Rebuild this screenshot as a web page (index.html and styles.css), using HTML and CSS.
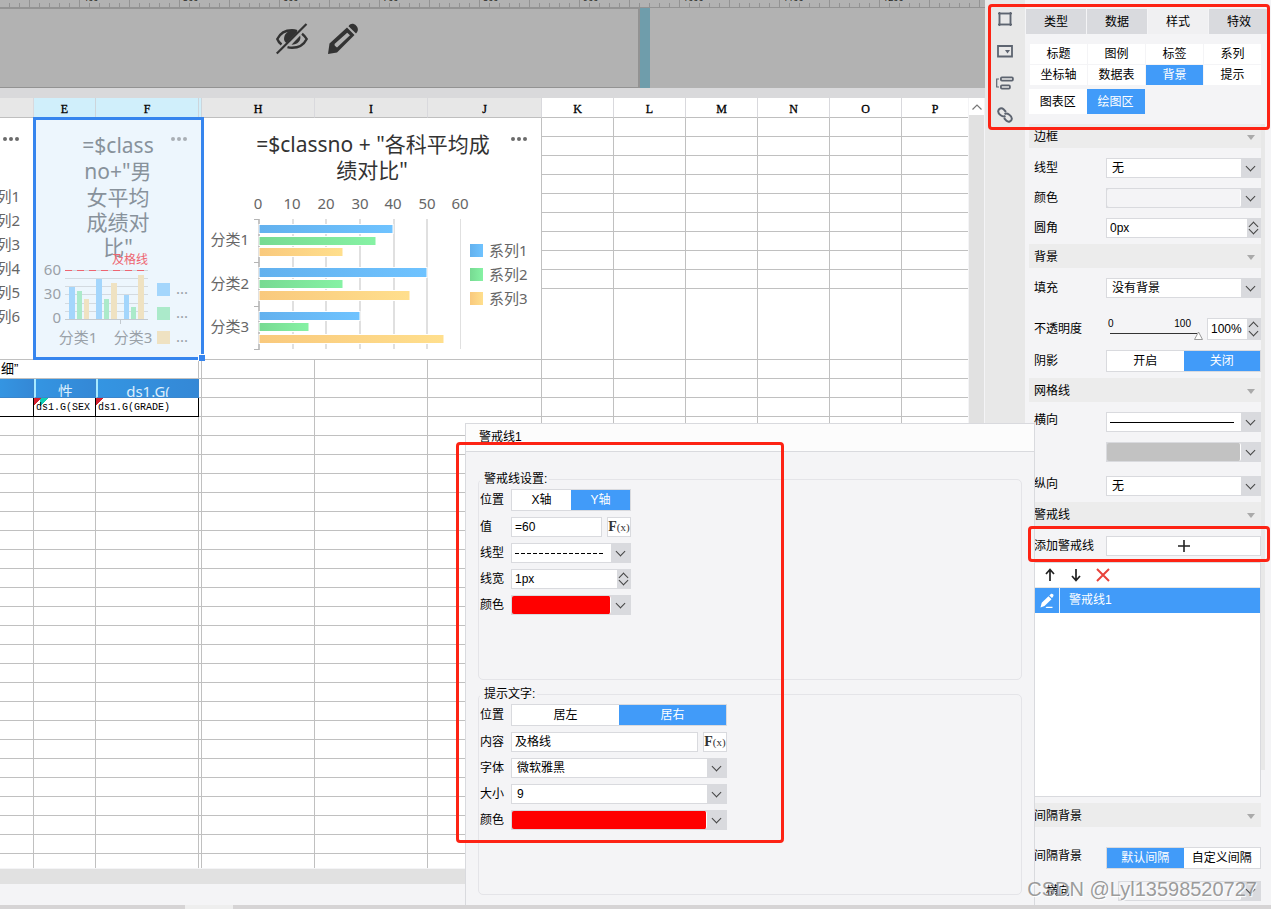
FILE: index.html
```html
<!DOCTYPE html>
<html lang="zh-CN">
<head>
<meta charset="utf-8">
<title>报表设计器</title>
<link rel="stylesheet" href="styles.css">
</head>
<body>
<div class="app">
  <div class="main">
    <div class="work">
      <svg class="ruler" width="100%" height="8" aria-hidden="true">
        <defs>
          <pattern id="ticks" x="29" width="50" height="8" patternUnits="userSpaceOnUse">
            <path d="M.5 0v8M10.5 3v5M20.5 3v5M30.5 3v5M40.5 3v5" stroke="#939393" fill="none"/>
          </pattern>
        </defs>
        <rect width="100%" height="8" fill="url(#ticks)"/>
        <path d="M0 7.5h2000" stroke="#939393"/>
        <g class="ruler-text"><text x="83" y="1">400</text><text x="183" y="1">500</text><text x="283" y="1">600</text><text x="383" y="1">700</text><text x="483" y="1">800</text><text x="583" y="1">900</text><text x="683" y="1">1000</text><text x="783" y="1">1100</text><text x="883" y="1">1200</text></g>
      </svg>
      <div class="banner">
        <div class="banner-item">
          <svg width="32" height="32" viewBox="0 0 32 32" fill="none" stroke="#333" stroke-width="2.4">
            <path d="M5.500 21.500C3 19.500 1.800 17.500 1.300 16C4 10.500 9.500 7.200 16 7.200c2 0 3.500.3 5 .9"/>
            <path d="M26 10.800c2.200 1.700 3.800 3.700 4.700 5.200C28 21.500 22.500 24.800 16 24.800c-1.800 0-3.200-.2-4.500-.6"/>
            <path d="M8 16c0-5 4-8.500 8.500-8.500 2 0 3.500.5 5 1.500L10.500 20C9 19 8 17.500 8 16z" fill="#333" stroke="none"/>
            <path d="M24.200 12.500c1.300 5-2.700 9.300-8.700 9.300z" fill="#333" stroke="none"/>
            <path d="M.8 30.500L30.500 1" stroke-width="2.200"/>
          </svg>
          <svg width="32" height="32" viewBox="0 0 32 32">
            <path fill="#333" fill-rule="evenodd" d="M1 31l1.500-10.500L20 4.500l7.500 7.500L10 29.500zM7.800 22.800l2.200 1.700L23 12.200l-2.800-2.500L7.500 21z"/>
            <path fill="#333" d="M21.500 3.200C23.500.2 26.500.2 28.800 2.300c2.700 2.500 2.700 5.700.2 8.200z"/>
          </svg>
        </div>
        <div class="banner-grip"></div>
      </div>
      <div class="sheet-area">
        <div class="sheet">
          <table class="grid">
            <colgroup><col class="c-d"><col class="c-e"><col class="c-f"><col class="c-g"><col class="c-h"><col class="c-h"><col class="c-j"><col class="c-k"><col class="c-k"><col class="c-k"><col class="c-k"><col class="c-k"><col></colgroup>
            <thead>
              <tr><th class="used"></th><th class="sel">E</th><th class="sel">F</th><th class="sel"></th><th class="used">H</th><th class="used">I</th><th class="used">J</th><th>K</th><th>L</th><th>M</th><th>N</th><th>O</th><th>P</th></tr>
            </thead>
            <tbody>
              <tr>
                <td rowspan="10" class="chart-cell no-line">
                  <svg class="chart" width="33" height="241" viewBox="0 118 33 241">
                    <g fill="#6b6b6b"><circle cx="5" cy="139" r="2"/><circle cx="11" cy="139" r="2"/><circle cx="17" cy="139" r="2"/></g>
                    <g class="legend" text-anchor="end"><text x="20" y="202">系列1</text><text x="20" y="226">系列2</text><text x="20" y="250">系列3</text><text x="20" y="274">系列4</text><text x="20" y="298">系列5</text><text x="20" y="322">系列6</text></g>
                  </svg>
                </td>
                <td rowspan="10" colspan="3" class="chart-cell">
                  <div class="selection">
                    <svg class="chart" width="165" height="237" viewBox="36 120 165 237">
                      <g class="title faded" text-anchor="middle"><text x="118" y="153">=$class</text><text x="118" y="179">no+"男</text><text x="118" y="205">女平均</text><text x="118" y="230">成绩对</text><text x="118" y="255">比"</text></g>
                      <g fill="#a9afb5"><circle cx="173" cy="139" r="2"/><circle cx="179" cy="139" r="2"/><circle cx="185" cy="139" r="2"/></g>
                      <path d="M65 278.500h83M65 286.500h83M65 294.500h83M65 303.500h83M65 311.500h83" stroke="#d3dae0"/>
                      <path d="M65 319.500h83M120.500 320v4" stroke="#c3cad0"/>
                      <g fill="#a4d6fc"><path d="M69 287h6v32h-6zM96 279h6v40h-6zM124 295h5v24h-5z"/></g>
                      <g fill="#abeaca"><path d="M77 291h5v28h-5zM104 299h5v20h-5zM131 307h5v12h-5z"/></g>
                      <g fill="#efe2c2"><path d="M84 299h5v20h-5zM111 283h6v36h-6zM138 275h6v44h-6z"/></g>
                      <path d="M65 270.500h83" stroke="#cfd6dc"/><path d="M65 270.500h83" stroke="#ee6470" stroke-dasharray="7 5"/>
                      <text class="warn" x="148" y="264" text-anchor="end">及格线</text>
                      <g class="axis faded-axis" text-anchor="end"><text x="61" y="275">60</text><text x="61" y="299">30</text><text x="61" y="323">0</text></g>
                      <g class="axis faded-axis" text-anchor="middle"><text x="78" y="343">分类1</text><text x="133" y="343">分类3</text></g>
                      <path fill="#a4d6fc" d="M157 283h13v13h-13z"/><path fill="#abeaca" d="M157 307h13v13h-13z"/><path fill="#efe2c2" d="M157 331h13v13h-13z"/>
                      <g class="axis faded-axis"><text x="176" y="294">...</text><text x="176" y="318">...</text><text x="176" y="342">...</text></g>
                    </svg>
                  </div>
                </td>
                <td rowspan="10" colspan="3" class="chart-cell">
                  <svg class="chart" width="338" height="241" viewBox="202 118 338 241">
                    <defs>
                      <linearGradient id="b"><stop stop-color="#63b1ee"/><stop offset="1" stop-color="#6fc3ff"/></linearGradient>
                      <linearGradient id="g"><stop stop-color="#77da92"/><stop offset="1" stop-color="#86f2a4"/></linearGradient>
                      <linearGradient id="y"><stop stop-color="#f9c97d"/><stop offset="1" stop-color="#ffdf8d"/></linearGradient>
                    </defs>
                    <g class="title" text-anchor="middle"><text x="373" y="152">=$classno + "各科平均成</text><text x="372" y="178">绩对比"</text></g>
                    <g fill="#6b6b6b"><circle cx="513" cy="139" r="2"/><circle cx="519" cy="139" r="2"/><circle cx="525" cy="139" r="2"/></g>
                    <g class="axis" text-anchor="middle"><text x="258" y="209">0</text><text x="292" y="209">10</text><text x="326" y="209">20</text><text x="360" y="209">30</text><text x="393" y="209">40</text><text x="427" y="209">50</text><text x="460" y="209">60</text></g>
                    <path d="M293 219v130M326 219v130M360 219v130M394 219v130M427 219v130" stroke="#e0e0e0" stroke-width="2"/>
                    <path d="M460.500 219v130" stroke="#e0e0e0"/>
                    <path d="M259 219v131" stroke="#c4c4c4" stroke-width="2"/>
                    <path d="M254 219.500h5M254 262.500h5M254 306.500h5M254 349.500h5" stroke="#b4b4b4"/>
                    <g stroke="#fff"><g fill="url(#b)"><rect x="259" y="224.500" width="134" height="9"/><rect x="259" y="267.500" width="168" height="10"/><rect x="259" y="311.500" width="101" height="9"/></g>
                    <g fill="url(#g)"><rect x="259" y="236.500" width="117" height="9"/><rect x="259" y="279.500" width="84" height="9"/><rect x="259" y="322.500" width="50" height="9"/></g>
                    <g fill="url(#y)"><rect x="259" y="247.500" width="84" height="9"/><rect x="259" y="290.500" width="151" height="10"/><rect x="259" y="334.500" width="185" height="9"/></g></g>
                    <g class="axis" text-anchor="end"><text x="249" y="245">分类1</text><text x="249" y="289">分类2</text><text x="249" y="332">分类3</text></g>
                    <rect x="470" y="244" width="13" height="13" fill="url(#b)"/><rect x="470" y="268" width="13" height="13" fill="url(#g)"/><rect x="470" y="292" width="13" height="13" fill="url(#y)"/>
                    <g class="legend"><text x="489" y="256">系列1</text><text x="489" y="280">系列2</text><text x="489" y="304">系列3</text></g>
                  </svg>
                </td>
                <td></td><td></td><td></td><td></td><td></td><td></td>
              </tr>
              <tr><td></td><td></td><td></td><td></td><td></td><td></td></tr>
              <tr><td></td><td></td><td></td><td></td><td></td><td></td></tr>
              <tr><td></td><td></td><td></td><td></td><td></td><td></td></tr>
              <tr><td></td><td></td><td></td><td></td><td></td><td></td></tr>
              <tr><td></td><td></td><td></td><td></td><td></td><td></td></tr>
              <tr><td></td><td></td><td></td><td></td><td></td><td></td></tr>
              <tr><td></td><td></td><td></td><td></td><td></td><td></td></tr>
              <tr><td></td><td></td><td></td><td></td><td></td><td></td></tr>
              <tr class="tall"><td></td><td></td><td></td><td></td><td></td><td></td></tr>
              <tr><td colspan="3" class="detail">细”</td><td></td><td></td><td></td><td></td><td></td><td></td><td></td><td></td><td></td><td></td></tr>
              <tr><td class="blue"></td><td class="blue edge"><div>性</div></td><td class="blue edge"><div>ds1.G(</div></td><td></td><td></td><td></td><td></td><td></td><td></td><td></td><td></td><td></td><td></td></tr>
              <tr><td class="bound"></td><td class="bound mark expand">ds1.G(SEX</td><td class="bound mark">ds1.G(GRADE)</td><td></td><td></td><td></td><td></td><td></td><td></td><td></td><td></td><td></td><td></td></tr>
            </tbody>
            <tbody id="blank-rows"></tbody>
          </table>
        </div>
        <div class="vscroll"><button type="button" aria-label="向上滚动"><svg width="12" height="8" viewBox="0 0 12 8"><path d="M1.500 6.500L6 2l4.500 4.500" fill="none" stroke="#777" stroke-width="1.200"/></svg></button></div>
      </div>
      <div class="hscroll"></div>
      <div class="below"></div>
    </div>

    <nav class="rail">
      <button type="button" aria-label="形状"><svg width="16" height="16" viewBox="0 0 16 16" fill="none" stroke="#5d6470"><path d="M2.500 2.500h11v11h-11z" stroke-width="1.500"/><path d="M1 2.500h14M1 13.500h14M2.500 1v14M13.500 1v14" stroke-width="1.500"/></svg></button>
      <button type="button" aria-label="控件"><svg width="16" height="16" viewBox="0 0 16 16"><path d="M1 3h14v10.500H1z" fill="none" stroke="#5d6470" stroke-width="1.800"/><path d="M8 7h5l-2.500 3.500z" fill="#5d6470"/></svg></button>
      <button type="button" aria-label="组件"><svg width="18" height="16" viewBox="0 0 18 16" fill="none" stroke="#5d6470"><path d="M3 4H.7v8H3" stroke-width="1.200"/><rect x="4.900" y="2.400" width="12" height="3.200" rx="1" stroke-width="1.800"/><rect x="4.900" y="10.400" width="9" height="3.200" rx="1" stroke-width="1.800"/></svg></button>
      <button type="button" aria-label="链接"><svg width="16" height="16" viewBox="0 0 16 16" fill="none" stroke="#5d6470" stroke-width="2"><path d="M8.500 9C5.500 10.500 1 7 1.200 4.200 1.500 1.500 4.500.5 6.500 2.200L9 5"/><path d="M7.500 7c3-1.500 7.500 2 7.300 4.800-.3 2.700-3.300 3.700-5.300 2L7 11"/></svg></button>
    </nav>

    <aside class="panel">
      <div class="tabs"><button type="button">类型</button><button type="button">数据</button><button type="button" class="active">样式</button><button type="button">特效</button></div>
      <div class="subtabs"><button type="button">标题</button><button type="button">图例</button><button type="button">标签</button><button type="button">系列</button><button type="button">坐标轴</button><button type="button">数据表</button><button type="button" class="on">背景</button><button type="button">提示</button></div>
      <div class="areas"><button type="button">图表区</button><button type="button" class="on">绘图区</button></div>
      <div class="props">
        <h2>边框</h2>
        <div class="group">
          <div class="row"><label for="bline">线型</label><span class="drop"><select id="bline"><option>无</option></select></span></div>
          <div class="row"><label for="bcolor">颜色</label><span class="drop"><button type="button" id="bcolor" class="swatch none" aria-label="颜色"></button></span></div>
          <div class="row"><label for="radius">圆角</label><span class="spin"><input id="radius" type="text" value="0px"></span></div>
        </div>
        <h2>背景</h2>
        <div class="group">
          <div class="row"><label for="fill">填充</label><span class="drop"><select id="fill"><option>没有背景</option></select></span></div>
          <div class="row opacity"><label for="op">不透明度</label><span class="slider"><span class="scale"><span>0</span><span>100</span></span><input id="op" type="range" min="0" max="100" value="100"></span><span class="spin small"><input type="text" value="100%" aria-label="不透明度百分比"></span></div>
          <div class="row"><span class="label">阴影</span><span class="seg"><button type="button">开启</button><button type="button" class="on">关闭</button></span></div>
        </div>
        <h2>网格线</h2>
        <div class="group">
          <div class="row raised"><label for="hl">横向</label><span class="drop"><select id="hl" class="line solid"><option aria-label="实线"></option></select></span></div>
          <div class="row"><span class="label"></span><span class="drop"><button type="button" class="swatch gray" aria-label="横向颜色"></button></span></div>
          <div class="row raised spaced"><label for="vl">纵向</label><span class="drop"><select id="vl"><option>无</option></select></span></div>
        </div>
        <h2>警戒线</h2>
        <div class="group">
          <div class="row"><label for="add">添加警戒线</label><button type="button" id="add" class="add" aria-label="添加警戒线"><svg width="12" height="12" viewBox="0 0 12 12"><path d="M6 0v12M0 6h12" stroke="#222" stroke-width="1.600"/></svg></button></div>
        </div>
        <div class="list">
          <div class="list-tools">
            <button type="button" aria-label="上移"><svg width="12" height="14" viewBox="0 0 12 14"><path d="M6 13V2M2 6l4-4.500L10 6" fill="none" stroke="#222" stroke-width="1.700"/></svg></button>
            <button type="button" aria-label="下移"><svg width="12" height="14" viewBox="0 0 12 14"><path d="M6 1v11M2 8l4 4.500L10 8" fill="none" stroke="#222" stroke-width="1.700"/></svg></button>
            <button type="button" aria-label="删除"><svg width="14" height="14" viewBox="0 0 14 14"><path d="M1 1l12 12M13 1L1 13" stroke="#e8433b" stroke-width="2"/></svg></button>
          </div>
          <div class="list-row">
            <button type="button" aria-label="编辑"><svg width="16" height="16" viewBox="0 0 16 16" fill="#fff"><path d="M1.500 14.500l1.200-4.700 6.800-6.600 3 3-7 6.900zM10.300 2.400l1.300-1.200c.8-.7 1.700-.6 2.400.1.700.8.700 1.700 0 2.400l-1 1.300z"/><path d="M7.500 13.800h6v1.200h-7z"/></svg></button>
            <span>警戒线1</span>
          </div>
        </div>
        <h2>间隔背景</h2>
        <div class="group last">
          <div class="row raised"><span class="label">间隔背景</span><span class="seg"><button type="button" class="on">默认间隔</button><button type="button">自定义间隔</button></span></div>
          <div class="row indent"><label for="icolor">横向</label><span class="drop"><button type="button" id="icolor" class="swatch none" aria-label="横向"></button></span></div>
        </div>
        <div class="props-scroll"></div>
      </div>
    </aside>
  </div>
  <footer class="status"><span></span></footer>

  <section class="dialog" aria-labelledby="dlg-title">
    <h1 id="dlg-title">警戒线1</h1>
    <div class="dialog-body">
      <fieldset>
        <legend>警戒线设置:</legend>
        <div class="form narrow">
          <span class="label">位置</span><span class="seg"><button type="button">X轴</button><button type="button" class="on">Y轴</button></span>
          <label for="val">值</label><span class="with-fx"><input id="val" type="text" value="=60"><button type="button" class="fx">F<small>(x)</small></button></span>
          <label for="wl">线型</label><span class="drop"><select id="wl" class="line dash"><option aria-label="虚线"></option></select></span>
          <label for="ww">线宽</label><span class="spin"><input id="ww" type="text" value="1px"></span>
          <label for="wc">颜色</label><span class="drop"><button type="button" id="wc" class="swatch red" aria-label="颜色"></button></span>
        </div>
      </fieldset>
      <fieldset>
        <legend>提示文字:</legend>
        <div class="form wide">
          <span class="label">位置</span><span class="seg"><button type="button">居左</button><button type="button" class="on">居右</button></span>
          <label for="tx">内容</label><span class="with-fx"><input id="tx" type="text" value="及格线"><button type="button" class="fx">F<small>(x)</small></button></span>
          <label for="tf">字体</label><span class="drop"><select id="tf"><option>微软雅黑</option></select></span>
          <label for="ts">大小</label><span class="drop"><select id="ts" class="num"><option>9</option></select></span>
          <label for="tc">颜色</label><span class="drop"><button type="button" id="tc" class="swatch red" aria-label="颜色"></button></span>
        </div>
      </fieldset>
    </div>
  </section>

  <div class="callout callout-tabs"></div>
  <div class="callout callout-dialog"></div>
  <div class="callout callout-add"></div>
  <div class="watermark">CSDN @Lyl13598520727</div>
</div>
<script src="app.js"></script>
</body>
</html>
```
FILE: styles.css
```css
* { box-sizing: border-box; }
body { margin: 0; font: 12px/16px "Liberation Sans", "Noto Sans CJK SC", sans-serif; color: #000; background: #f4f4f6; }
button, input, select { font: inherit; color: inherit; margin: 0; padding: 0; border: 0; border-radius: 0; background: none; }
svg { display: block; }

.app { position: relative; height: 100vh; min-height: 760px; display: flex; flex-direction: column; overflow: hidden; }
.main { flex: 1; min-height: 0; display: flex; }
.status { height: 4px; background: #d6d4d5; padding-left: 185px; }
.status span { display: block; width: 48px; height: 4px; background: #eee; }

/* work area */
.work { flex: 1; min-width: 0; display: flex; flex-direction: column; }
.ruler { background: #b2b2b2; flex: none; }
.ruler-text { font: 9px "Noto Sans", sans-serif; fill: #222; }
.banner { flex: none; height: 80px; display: flex; background: #b2b2b2; }
.banner-item { flex: 0 0 65%; display: flex; justify-content: center; gap: 19px; padding: 14px 4px 0 0; border: 1px solid #939393; border-left: 0; border-right-width: 2px; }
.banner-grip { width: 10px; background: #6f9dab; }
.sheet-area { flex: 1; min-height: 0; display: flex; border-top: 10px solid #d9d9db; }
.sheet { flex: 1; min-width: 0; overflow: hidden; background: #fff; }
.vscroll { width: 17px; background: #e1e1e1; border: solid #f4f4f6; border-width: 0 1px; }
.vscroll button { width: 100%; height: 17px; display: grid; place-items: center; background: #fff; }
.hscroll { flex: none; height: 16px; background: #e1e1e1; border-top: 1px solid #f4f4f6; }
.below { flex: none; height: 21px; background: #f4f4f6; }

.grid { width: 100%; table-layout: fixed; border-collapse: separate; border-spacing: 0; }
.c-d { width: 34px; } .c-e { width: 62px; } .c-f { width: 103px; } .c-g { width: 3px; }
.c-h { width: 113px; } .c-j { width: 114px; } .c-k { width: 72px; }
.grid th { height: 20px; padding: 2px 0 0; border-right: 1px solid #d9d9dd; border-bottom: 1px solid #bfbfbf; font: 12px/16px "Liberation Serif", serif; -webkit-text-stroke: .3px #000; }
.grid td { height: 19px; padding: 0; border-right: 1px solid #c0c0c0; border-bottom: 1px solid #c0c0c0; white-space: nowrap; overflow: hidden; line-height: 16px; }
.grid th:last-child, .grid td:last-child { border-right: 0; }
.grid .used { background: #e7e7e7; }
.grid .sel { background: #d0effb; border-right-color: #cdd5db; }
.grid .tall td { height: 71px; }
.grid .chart-cell { vertical-align: top; overflow: visible; border-right-color: #c0c0c0; }
.grid .no-line { border-right: 0; }
.grid .detail { padding-left: 1px; font-size: 13px; }
.grid .blue { background: linear-gradient(90deg, #3495e2, #3488d6); border-color: #3a86cc; color: #dceefc; text-align: center; font: 15px/24px "Noto Sans", "Noto Sans CJK SC", sans-serif; }
.grid .blue div { height: 18px; overflow: hidden; }
.grid .edge { border-left: 2px solid #a8eaff; }
.grid .bound { border-color: #000; padding-left: 2px; font: 10px/17px "Liberation Mono", monospace; }
.grid .mark { background: linear-gradient(135deg, #d4202e 5px, transparent 5px) no-repeat; }
.grid .expand { background: linear-gradient(135deg, #d4202e 5px, transparent 5px) no-repeat, linear-gradient(135deg, #0dcfb4 6px, transparent 6px) 6px 0 no-repeat; }

.selection { position: relative; width: 171px; height: 243px; margin: -1px -6px -3px -1px; border: 3px solid #3685ee; background: #edf6fd; }
.selection::after { content: ""; position: absolute; right: -4px; bottom: -4px; width: 6px; height: 6px; background: #3685ee; border: 1px solid #fff; border-width: 1px 0 0 1px; }
.title { font: 21px "Noto Sans", "Noto Sans CJK SC", sans-serif; fill: #333; }
.faded { fill: #88929b; }
.axis, .legend { font: 15px "Noto Sans", "Noto Sans CJK SC", sans-serif; fill: #666; }
.faded-axis { fill: #9aa1a8; }
.warn { font: 12px "Noto Sans CJK SC", sans-serif; fill: #ee6470; }

/* icon rail */
.rail { width: 40px; background: #e8e8e8; padding-top: 3px; }
.rail button { width: 40px; height: 32px; display: grid; place-items: center; }

/* property panel */
.panel { width: 246px; display: flex; flex-direction: column; padding-top: 9px; }
.tabs { display: grid; grid-template-columns: repeat(4, 1fr); gap: 1px; padding: 0 2px 0 1px; height: 25px; }
.tabs button { background: #d9dade; }
.tabs .active { background: #f0f0f2; }
.subtabs { display: grid; grid-template-columns: repeat(4, 1fr); grid-auto-rows: 20px; gap: 1px; padding: 10px 10px 4px 5px; }
.subtabs button, .areas button { background: #fff; }
.areas { display: grid; grid-template-columns: repeat(4, 1fr); height: 25px; padding: 0 11px 0 4px; }
.panel .on, .seg .on { background: #419bf9; color: #fff; }
.props { position: relative; flex: 1; min-height: 0; display: flex; flex-direction: column; padding: 10px 10px 4px 4px; }
.props h2 { flex: none; margin: 0; height: 24px; padding: 2px 6px 0 5px; font: inherit; line-height: 22px; background: #ececec; display: flex; justify-content: space-between; align-items: center; }
.props h2::after { content: ""; border: 4px solid transparent; border-top: 5px solid #aaa; border-bottom: 0; }
.group { flex: none; display: flex; flex-direction: column; gap: 10px; padding: 10px 0 6px 5px; }
.row { display: flex; align-items: center; min-height: 20px; }
.row > label, .row > .label { flex: 0 0 72px; }
.raised > label, .raised > .label { padding-bottom: 4px; }
.spaced { margin-top: 4px; }
.opacity { margin-top: 10px; min-height: 22px; }
.group.last { padding: 20px 0 0 5px; gap: 12px; }
.indent { padding-left: 12px; }

.drop, .spin, .seg { position: relative; flex: 1; min-width: 0; display: flex; height: 20px; background: #d9dade; border: 1px solid #d9dade; }
.drop { padding-right: 19px; }
.drop::after { content: ""; position: absolute; right: 6px; top: 4px; width: 6px; height: 6px; border: solid #444; border-width: 0 1px 1px 0; transform: rotate(45deg); pointer-events: none; }
.drop select { flex: 1; min-width: 0; appearance: none; background-color: #fff; padding-left: 5px; line-height: 18px; }
.swatch { flex: 1; border-radius: 2px; border-right: 1px solid #fff; }
.swatch.none { background: #f4f4f6; }
.swatch.gray { background: #c2c2c2; }
.swatch.red { background: #f00; }
.drop .line { background-repeat: no-repeat; background-position: 3px 9px; }
.drop .solid { background-image: linear-gradient(#000, #000); background-size: calc(100% - 10px) 1px; }
.drop .dash { background-image: repeating-linear-gradient(90deg, #000 0 4px, transparent 4px 6px); background-size: calc(100% - 10px) 1px; }
.spin { padding-right: 13px; }
.spin::before, .spin::after { content: ""; position: absolute; right: 3px; width: 6px; height: 6px; border: solid #444; transform: rotate(45deg); }
.spin::before { top: 4px; border-width: 1px 0 0 1px; }
.spin::after { bottom: 4px; border-width: 0 1px 1px 0; }
.spin input { flex: 1; min-width: 0; width: 100%; background: #fff; padding-left: 3px; }
.spin.small { flex: 0 0 54px; height: 22px; }
.slider { flex: 1; min-width: 0; display: flex; flex-direction: column; height: 22px; margin-right: 4px; }
.scale { display: flex; justify-content: space-between; padding: 0 12px 0 2px; font-size: 10px; line-height: 12px; }
.slider input { appearance: none; width: 100%; height: 10px; padding-left: 4px; background: linear-gradient(#333, #333) 4px 3px / calc(100% - 10px) 1px no-repeat; }
.slider input::-webkit-slider-thumb { appearance: none; width: 9px; height: 9px; background: url("data:image/svg+xml,%3Csvg xmlns='http://www.w3.org/2000/svg' width='9' height='9'%3E%3Cpath d='M4.500 1L8.500 8.500H.5z' fill='white' stroke='%23999'/%3E%3C/svg%3E") no-repeat; }
.seg { height: 22px; background: #fff; }
.seg button { flex: 1; white-space: nowrap; }
.add { flex: 1; height: 20px; display: grid; place-items: center; background: #fff; border: 1px solid #d9dade; }
.list { flex: 1; min-height: 60px; margin: 0 0 6px 5px; background: #fff; border: 1px solid #d9dade; }
.list-tools { height: 25px; display: flex; align-items: center; gap: 14px; padding-left: 9px; border-bottom: 1px solid #e6e6e6; }
.list-row { display: flex; height: 25px; background: #419bf9; color: #fff; }
.list-row button { width: 25px; display: grid; place-items: center; border-right: 1px solid #e6f2fe; }
.list-row span { padding-left: 9px; line-height: 25px; }
.props-scroll { position: absolute; right: 6px; top: 10px; width: 4px; height: 646px; background: #e8e8e8; }

/* dialog */
.dialog { position: absolute; left: 465px; right: 236px; top: 423px; bottom: 4px; display: flex; flex-direction: column; background: #f4f4f6; border: 1px solid #d9dade; border-bottom: 0; }
.dialog h1 { flex: none; margin: 0; height: 28px; padding-left: 13px; font: inherit; line-height: 27px; background: #fcfcfc; border-bottom: 1px solid #d9dade; }
.dialog-body { flex: 1; min-height: 0; display: grid; grid-template-rows: 1fr 1fr; gap: 6px; padding: 19px 12px 10px; }
fieldset { min-width: 0; margin: 0; padding: 2px 1px; border: 1px solid #e4e4e8; border-radius: 5px; }
legend { padding: 0 2px 0 4px; line-height: 16px; }
.form { display: grid; grid-template-columns: 31px minmax(0, 1fr); row-gap: 6px; align-items: center; }
.narrow { width: 151px; }
.wide { width: 247px; }
.with-fx { display: flex; gap: 5px; height: 20px; }
.with-fx input { flex: 1; min-width: 0; padding-left: 3px; background: #fff; border: 1px solid #d9dade; }
.fx { width: 24px; background: #fff; border: 1px solid #d9dade; font: bold 14px/16px "Liberation Serif", serif; color: #333; }
.fx small { font-size: 11px; font-weight: normal; }

/* marks over the page */
.callout { position: absolute; border: 3px solid #fd2314; border-radius: 4px; pointer-events: none; }
.callout-tabs { right: 1px; top: 4px; width: 282px; height: 126px; }
.callout-dialog { left: 456px; top: 442px; width: 328px; height: 401px; }
.callout-add { right: 1px; top: 526px; width: 242px; height: 36px; }
.watermark { position: absolute; right: 14px; bottom: 8px; font: 20px/24px "Liberation Sans", sans-serif; color: rgba(130, 130, 130, .8); text-shadow: 1px 1px 1px #fff; pointer-events: none; }
```
FILE: app.js
```js
const body = document.getElementById("blank-rows");
for (let r = 0; r < 24; r++) {
  const row = body.insertRow();
  for (let c = 0; c < 13; c++) row.insertCell();
}
```
